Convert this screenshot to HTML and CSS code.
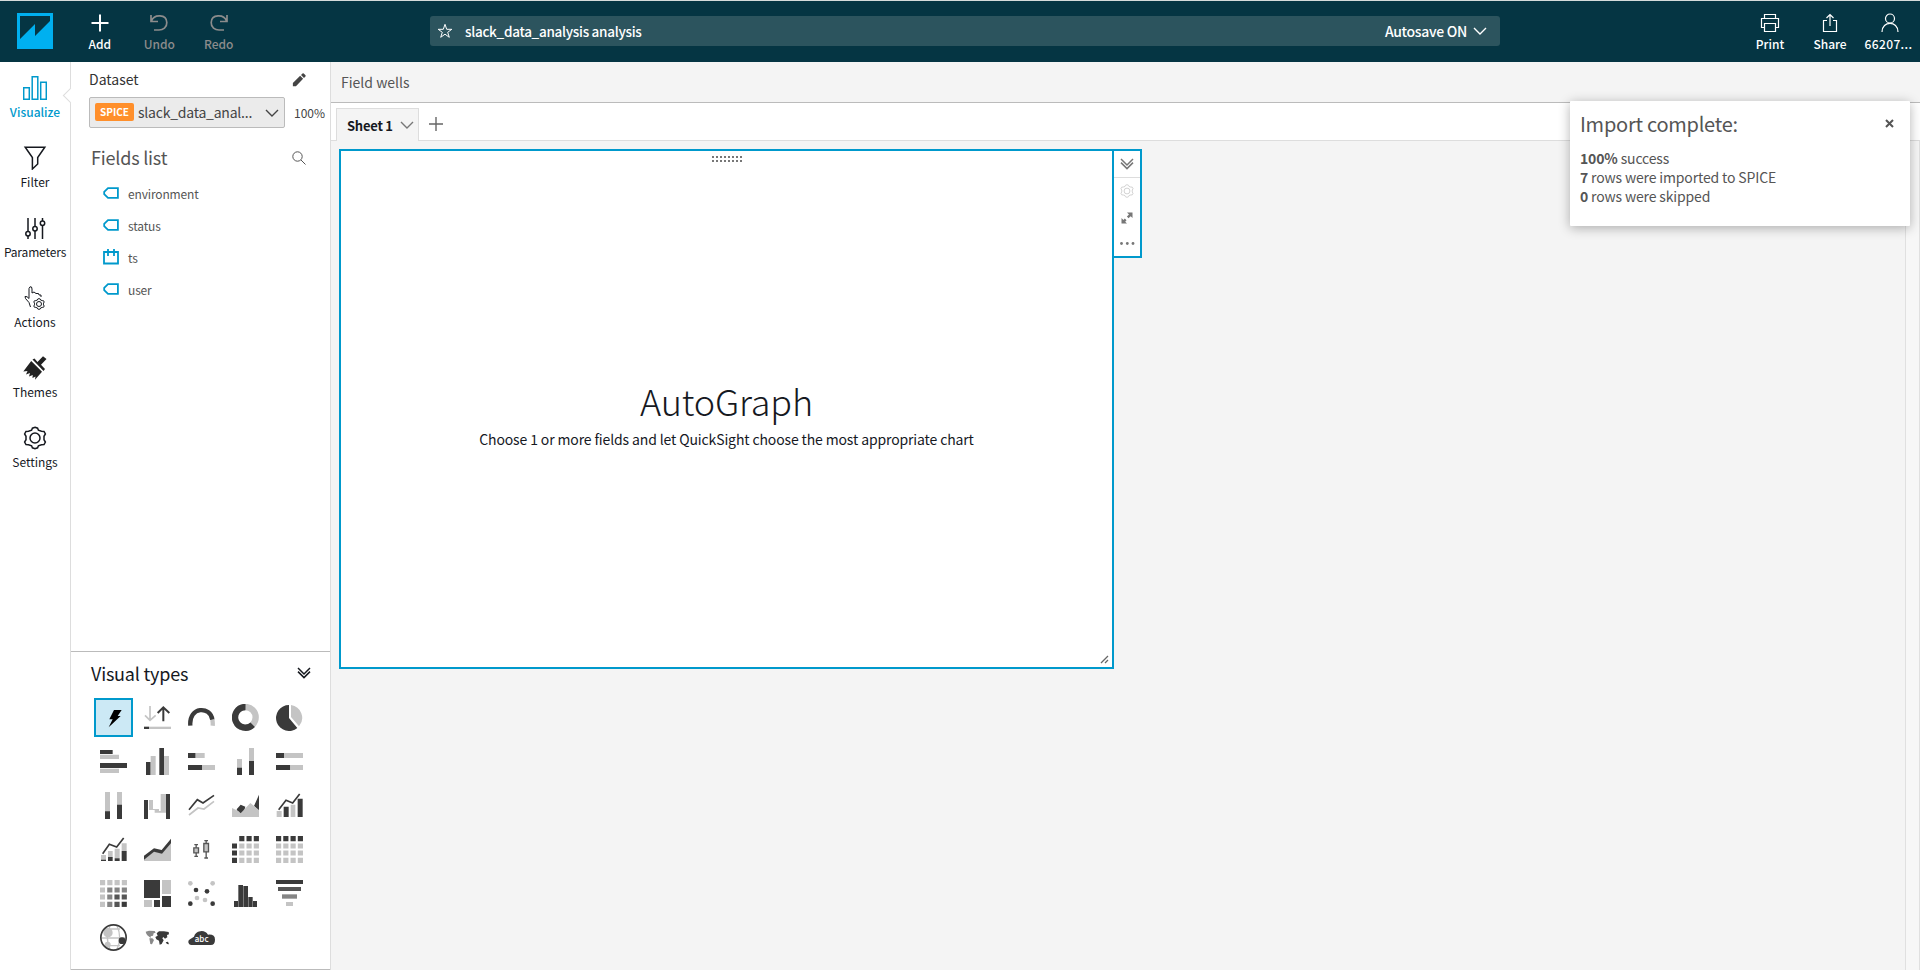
FILE: index.html
```
<!DOCTYPE html>
<html lang="en">
<head>
<meta charset="utf-8">
<title>slack_data_analysis analysis</title>
<link rel="stylesheet" href="styles.css">
</head>
<body>
<svg class="defs" width="0" height="0">
  <symbol id="gear" viewBox="0 0 24 24"><path d="M12 1.2 L14.6 2.2 L15.4 4.2 L18.5 5.2 L21 5.4 L22.4 8 L21 10.3 V13.7 L22.4 16 L21 18.6 L18.5 18.8 L15.4 19.8 L14.6 21.8 L12 22.8 L9.4 21.8 L8.6 19.8 L5.5 18.8 L3 18.6 L1.6 16 L3 13.7 V10.3 L1.6 8 L3 5.4 L5.5 5.2 L8.6 4.2 L9.4 2.2 Z"/><circle cx="12" cy="12" r="5"/></symbol>
  <symbol id="tag" viewBox="0 0 16 12"><path d="M5 1.1H14.9V10.9H5L1.2 7.2V4.8Z"/></symbol>
  <symbol id="double-chevron" viewBox="0 0 14 12"><path d="M1 1 7 7 13 1M1 4.6 7 10.6 13 4.6"/></symbol>
</svg>
<header class="topbar">
  <svg class="logo" viewBox="0 0 36 36"><path fill="#00b0f0" d="M0 0H36V36H0Z"/><path fill="#053543" d="M3 3H33V8L18 23V11L3 26Z"/></svg>
  <nav class="tools">
    <div class="tool"><svg viewBox="0 0 20 20"><path d="M10 1.5V18.5M1.5 10H18.500" stroke-width="2"/></svg><span>Add</span></div>
    <div class="tool dim"><svg viewBox="0 0 20 20"><path d="M2 2V8.500H9M2.500 8C5 1 17.500 1 17.800 9.500C18 14.500 14 17 10 17H5" stroke-width="1.700"/></svg><span>Undo</span></div>
    <div class="tool dim"><svg viewBox="0 0 20 20"><path d="M18 2V8.500H11M17.500 8C15 1 2.500 1 2.200 9.500C2 14.500 6 17 10 17H15" stroke-width="1.700"/></svg><span>Redo</span></div>
  </nav>
  <div class="title-bar">
    <svg class="star" viewBox="0 0 16 16"><path d="M8 1.300 9.700 6.300H14.800L10.700 9.300 12.300 14.300 8 11.200 3.700 14.300 5.300 9.300 1.200 6.300H6.300Z"/></svg>
    <span class="title">slack_data_analysis analysis</span>
    <span class="autosave">Autosave ON</span>
    <svg class="chev" viewBox="0 0 14 8"><path d="M1 1 7 7 13 1"/></svg>
  </div>
  <nav class="account">
    <div class="tool"><svg viewBox="0 0 20 20"><path d="M4.500 5.500V1.500H15.500V5.500M4.500 14.500H1.500V5.500H18.500V14.500H15.500M4.500 10.500H15.500V18.500H4.500Z"/></svg><span>Print</span></div>
    <div class="tool"><svg viewBox="0 0 20 20"><path d="M7 7.500H3.500V18.500H16.500V7.500H13M10 13V1.500M6.500 5 10 1.500 13.500 5"/></svg><span>Share</span></div>
    <div class="tool"><svg viewBox="0 0 20 20"><circle cx="10" cy="5.500" r="4.500"/><path d="M2 19C2 7.500 18 7.500 18 19"/></svg><span class="user">66207...</span></div>
  </nav>
</header>
<div class="workspace">
  <nav class="rail">
    <div class="rail-item active"><svg viewBox="0 0 24 24"><path d="M.700 11.700H6.300V23.300H.700ZM9.200.800H14.800V23.300H9.200ZM17.700 6.200H23.300V23.300H17.700Z"/></svg><span>Visualize</span></div>
    <div class="rail-item"><svg viewBox="0 0 24 24"><path d="M2.200 1.200H21.800L14.700 11.500V18L9.400 23V11.500Z"/></svg><span>Filter</span></div>
    <div class="rail-item"><svg viewBox="0 0 24 24"><path d="M5 2V15.500M5 20V23M12 2V10.500M12 15V23M19.500 2V5M19.500 9.500V23"/><circle cx="5" cy="17.700" r="2.200"/><circle cx="12" cy="12.700" r="2.200"/><circle cx="19.500" cy="7.200" r="2.200"/></svg><span class="narrow">Parameters</span></div>
    <div class="rail-item thin"><svg viewBox="0 0 24 24"><path d="M7.500 21 6 16.500 2.500 12.500 2 10.500 4 10.700 6 12.500V2.500L7 .800 8.500 1 9 3V7L11 6 13 7.500 15.500 7.500 16 9 18 9V11"/><use href="#gear" x="10" y="12" width="12" height="12" stroke-width="2"/></svg><span>Actions</span></div>
    <div class="rail-item"><svg viewBox="0 0 24 24" class="solid"><path d="M9.500 3.500 11.500 2.500 14.500 6 20 .300 23.500 3 18 8.700 22 13 20.500 15Z"/><path d="M8.200 5 19 15.800 12 23.800 12.500 20.500 9.500 22 9.700 19 6 20.500 7 17 3 18.500 4.500 15 .300 15.500Z"/></svg><span>Themes</span></div>
    <div class="rail-item"><svg><use href="#gear"/></svg><span>Settings</span></div>
    <i class="pointer"></i>
  </nav>
  <aside class="panel">
    <section class="fields">
      <div class="row dataset"><span>Dataset</span><svg viewBox="0 0 16 16" class="pencil"><path d="M1 15V11.500L9.300 3.200 12.700 6.600 4.500 15ZM10.300 2.300 12 .600Q12.700 0 13.400.600L15.400 2.600Q16 3.300 15.400 4L13.700 5.700Z"/></svg></div>
      <div class="row source">
        <div class="select"><b class="spice">SPICE</b><span class="source-name">slack_data_anal...</span><svg class="chev" viewBox="0 0 14 8"><path d="M1 1 7 7 13 1"/></svg></div>
        <span class="pct">100%</span>
      </div>
      <div class="row list-head"><span class="list-title">Fields list</span><svg class="search" viewBox="0 0 14 14"><circle cx="5.500" cy="5.500" r="4.700"/><path d="M9 9 13.500 13.500"/></svg></div>
      <ul class="field-list">
        <li><svg class="tag"><use href="#tag"/></svg><span>environment</span></li>
        <li><svg class="tag"><use href="#tag"/></svg><span>status</span></li>
        <li><svg class="cal" viewBox="0 0 16 16"><path d="M1 3H15V14.500H1ZM5 0V7M11 0V7"/></svg><span>ts</span></li>
        <li><svg class="tag"><use href="#tag"/></svg><span>user</span></li>
      </ul>
    </section>
    <section class="visuals">
      <div class="row vhead"><span class="vtitle">Visual types</span><svg class="dchev"><use href="#double-chevron"/></svg></div>
      <div class="grid">
        <div class="cell selected"><svg viewBox="0 0 81 81"><path fill="#000" d="M42 18H65L53 36H62L26 70 38 46H28Z"/></svg></div>
        <div class="cell"><svg viewBox="0 0 81 81"><path class="lg" stroke-width="5" d="M18 6V50M3 34 18 49 35 34"/><path class="ld" stroke-width="6" d="M58 52V12M41 27 58 10 76 27"/><path class="g" d="M15 68H81V75H15Z"/><path d="M0 68H15V75H0Z"/></svg></div>
        <div class="cell"><svg viewBox="0 0 81 81"><path class="ld" stroke-width="13" d="M7 65C2 6 68 6 73 47"/><path class="lg" stroke-width="13" d="M73 47Q75 56 74 65"/></svg></div>
        <div class="cell"><svg viewBox="0 0 81 81"><circle class="lg" cx="40" cy="40" r="31" stroke-width="19"/><path class="ld" stroke-width="19" d="M40.500 9A31 31 0 1 0 62 62"/></svg></div>
        <div class="cell"><svg viewBox="0 0 81 81"><path d="M39 3A39 39 0 1 0 64 72L39 42Z"/><path class="g" d="M45 3A39 39 0 0 1 69 67L45 39Z"/></svg></div>

        <div class="cell"><svg viewBox="0 0 81 81"><path d="M0 6H38V18H0ZM0 45H81V60H0Z"/><path class="g" d="M0 20H57V33H0ZM0 62H57V75H0Z"/></svg></div>
        <div class="cell"><svg viewBox="0 0 81 81"><path d="M6 42H20V81H6ZM46 0H60V81H46Z"/><path class="g" d="M20 24H35V81H20ZM60 24H75V81H60Z"/></svg></div>
        <div class="cell"><svg viewBox="0 0 81 81"><path d="M0 15H23V30H0ZM0 51H43V66H0Z"/><path class="g" d="M23 15H50V30H23ZM43 51H81V66H43Z"/></svg></div>
        <div class="cell"><svg viewBox="0 0 81 81"><path class="g" d="M15 33H30V60H15ZM51 0H66V40H51Z"/><path d="M15 59H30V81H15ZM51 39H66V81H51Z"/></svg></div>
        <div class="cell"><svg viewBox="0 0 81 81"><path d="M0 15H24V30H0ZM0 51H43V66H0Z"/><path class="g" d="M24 15H81V30H24ZM43 51H81V66H43Z"/></svg></div>

        <div class="cell"><svg viewBox="0 0 81 81"><path class="g" d="M15 0H30V59H15ZM51 0H66V39H51Z"/><path d="M15 58H30V81H15ZM51 38H66V81H51Z"/></svg></div>
        <div class="cell"><svg viewBox="0 0 81 81"><path class="g" d="M12 24H27V51H45V57H50V6H66V62H32V54H15V24Z"/><path d="M0 24H12V81H0ZM66 6H78V81H66Z"/></svg></div>
        <div class="cell"><svg viewBox="0 0 81 81"><path class="ld" stroke-width="5" d="M3 53 28 23 45 33 78 10"/><path class="lg" stroke-width="5" d="M3 69 30 48 48 51 78 28"/></svg></div>
        <div class="cell"><svg viewBox="0 0 81 81"><path d="M14 52 26 38 40 44 34 65H20ZM66 42 81 8V56Z"/><path class="g" d="M0 48 20 58 26 64 55 33 81 54V75H0Z"/></svg></div>
        <div class="cell"><svg viewBox="0 0 81 81"><path class="g" d="M2 57H17V75H2ZM44 38H58V75H44Z"/><path d="M23 44H38V75H23ZM65 20H80V75H65Z"/><path class="ld" stroke-width="5" d="M8 53 30 25 50 33 71 6"/></svg></div>

        <div class="cell"><svg viewBox="0 0 81 81"><path class="g" d="M3 57H18V72H3ZM24 45H38V64H24ZM44 38H59V67H44ZM65 22H80V45H65Z"/><path d="M3 71H18V75H3ZM24 63H38V75H24ZM44 67H59V75H44ZM65 45H80V75H65Z"/><path class="ld" stroke-width="5" d="M8 53 28 25 50 33 71 6"/></svg></div>
        <div class="cell"><svg viewBox="0 0 81 81"><path class="g" d="M0 69 30 46 54 52 81 22V75H0Z"/><path d="M0 59 30 37 53 42 81 8V22L54 53 30 47 0 71Z"/></svg></div>
        <div class="cell"><svg viewBox="0 0 81 81"><path stroke="#555" stroke-width="4" fill="none" d="M24.500 25V62M54.500 13V67M19 26H30M19 61H30M49 14H60M49 66H60"/><path class="g" stroke="#555" stroke-width="4" d="M17.500 35.500H31.500V50.500H17.500ZM47.500 22.500H61.500V47.500H47.500Z"/></svg></div>
        <div class="cell"><svg viewBox="0 0 81 81"><path class="dashg" d="M21.700 30H81M21.700 51H81M21.700 73H81"/><path class="dashd" d="M21.700 8H81M0 30H15M0 51H15M0 73H15"/></svg></div>
        <div class="cell"><svg viewBox="0 0 81 81"><path class="dashg" d="M0 30H81M0 51H81M0 73H81"/><path class="dashd" d="M0 8H81"/></svg></div>

        <div class="cell"><svg viewBox="0 0 81 81"><path class="dashg" d="M0 8H81M0 30H15M0 51H15M0 73H15"/><path class="dashm" d="M21.700 30H81M21.700 51H37M21.700 73H37"/><path class="dashn" d="M43.300 51H81M43.300 73H60"/><path class="dashd" d="M65 73H81"/></svg></div>
        <div class="cell"><svg viewBox="0 0 81 81"><path d="M0 0H48V54H0ZM54 48H81V81H54ZM30 60H48V81H30Z"/><path class="g" d="M54 0H81V42H54ZM0 60H24V81H0Z"/></svg></div>
        <div class="cell"><svg viewBox="0 0 81 81"><g class="g"><circle cx="7" cy="10" r="7"/><circle cx="74" cy="10" r="7"/><circle cx="27" cy="54" r="7"/><circle cx="51" cy="60" r="7"/></g><circle cx="24" cy="30" r="7"/><circle cx="57" cy="34" r="7"/><circle cx="7" cy="71" r="7"/><circle cx="74" cy="71" r="7"/></svg></div>
        <div class="cell"><svg viewBox="0 0 81 81"><path d="M6 63H18V81H6ZM19 15H33V81H19ZM34 18H48V81H34ZM49 51H62V81H49ZM63 63H75V81H63Z"/></svg></div>
        <div class="cell"><svg viewBox="0 0 81 81"><path d="M0 0H81V12H0Z"/><path fill="#555" d="M6 21H75V33H6Z"/><path fill="#858585" d="M18 43H63V56H18Z"/><path class="g" d="M30 66H51V78H30Z"/></svg></div>

        <div class="cell"><svg viewBox="0 0 81 81"><path class="lg" stroke-width="4" d="M5 42H76M20 15H60M20 65H60M30 5Q14 40 30 76M51 5Q67 40 51 76"/><circle class="g" cx="24" cy="26" r="14"/><circle class="g" cx="23" cy="62" r="9"/><circle cx="66" cy="50" r="10"/><circle class="ld" cx="40.500" cy="40.500" r="38" stroke-width="5"/></svg></div>
        <div class="cell"><svg viewBox="0 0 81 81"><path fill="#8a8a8a" d="M5 23 15 20 32 21 35 26 29 28 27 35 20 37 20 42 10 34 7 29ZM16 43 25 43 30 48 24 61 19 60Z"/><path d="M38 28 45 22 60 22 74 24 75 31 69 33 70 40 63 44 58 39 55 43 59 49 53 60 47 62 45 50 37 46 34 39 41 35ZM65 55 72 53 75 61 69 60Z"/></svg></div>
        <div class="cell"><svg viewBox="0 0 81 81"><path d="M9 63A9 9 0 0 1 6 46L18 38A23 22 0 0 1 60 32Q81 30 81 47T67 63Z"/><text x="41" y="54" class="abc">abc</text></svg></div>
      </div>
    </section>
  </aside>
  <main class="main">
    <div class="wells"><span>Field wells</span></div>
    <div class="tabs">
      <div class="tab"><span class="tab-label">Sheet 1</span><svg class="chev" viewBox="0 0 14 8"><path d="M1 1 7 7 13 1"/></svg></div>
      <svg class="plus" viewBox="0 0 14 14"><path d="M7 0V14M0 7H14"/></svg>
    </div>
    <div class="sheet">
      <div class="visual">
        <i class="grip"></i>
        <h1>AutoGraph</h1>
        <p>Choose 1 or more fields and let QuickSight choose the most appropriate chart</p>
        <svg class="resize" viewBox="0 0 9 9"><path d="M1 8 8 1M5 8 8 5"/></svg>
      </div>
      <div class="vmenu">
        <div class="vm-top"><svg class="dchev"><use href="#double-chevron"/></svg></div>
        <svg class="vm-gear"><use href="#gear"/></svg>
        <svg class="vm-exp" viewBox="0 0 12 12"><path fill="#777" d="M6 .500H11.500V6L9.700 4.200 7.500 6.300 5.900 4.600 8 2.400ZM.500 6V11.500H6L4.200 9.700 5.500 8.200 3.800 6.500 2.400 7.900Z"/></svg>
        <svg class="vm-dots" viewBox="0 0 15 3"><g fill="#777"><circle cx="1.500" cy="1.500" r="1.400"/><circle cx="7.300" cy="1.500" r="1.400"/><circle cx="13" cy="1.500" r="1.400"/></g></svg>
      </div>
      <div class="scroll"></div>
    </div>
  </main>
</div>
<div class="toast">
  <div class="toast-head"><span class="toast-title">Import complete:</span><svg class="close" viewBox="0 0 9 9"><path d="M1 1 8 8M8 1 1 8"/></svg></div>
  <div class="line"><b>100%</b> success</div>
  <div class="line"><b>7</b> rows were imported to SPICE</div>
  <div class="line"><b>0</b> rows were skipped</div>
</div>
</body>
</html>
```
FILE: styles.css
```
* { box-sizing: border-box; }
body { margin: 0; width: 1920px; height: 970px; overflow: hidden; display: flex; flex-direction: column; font-family: "Noto Sans CJK SC", "Noto Sans", sans-serif; font-size: 12px; color: #16191f; background: #fff; }
svg { display: block; flex: none; fill: none; stroke: currentColor; }
span { white-space: nowrap; }
i { display: block; }
.defs { position: absolute; }

.topbar { height: 62px; flex: none; border-top: 1px solid #d5dbdb; background: #053543; color: #fff; display: flex; align-items: flex-start; }
.logo { width: 36px; height: 36px; margin: 12px 0 0 17px; stroke: none; }
.tools { display: flex; margin-left: 17px; width: 180px; }
.tool { width: 60px; display: flex; flex-direction: column; align-items: center; padding-top: 12px; font-weight: 500; line-height: 16px; font-size: 12px; }
.tools .tool { width: 59.5px; }
.tool svg { width: 20px; height: 20px; margin-bottom: 3px; stroke-width: 1.2; }
.dim { color: #8c8c8c; }
.user { letter-spacing: .4px; margin-right: 3px; }
.title-bar { width: 1070px; height: 30px; margin: 15px 0 0 180px; background: #2c545e; border-radius: 3px; display: flex; align-items: center; padding: 0 13px 0 7px; font-size: 14px; font-weight: 500; }
.title-bar span { margin-top: -1px; }
.star { width: 16px; height: 16px; }
.title { margin-left: 12px; font-size: 13.5px; letter-spacing: -.28px; }
.autosave { margin-left: auto; letter-spacing: -.3px; }
.title-bar .chev { width: 14px; height: 8px; margin-left: 6px; stroke-width: 1.4; }
.account { display: flex; margin-left: 240px; }

.workspace { flex: 1; display: flex; min-height: 0; }
.rail { width: 71px; flex: none; border-right: 1px solid #ddd; position: relative; padding-top: 14px; }
.rail-item { height: 70px; display: flex; flex-direction: column; align-items: center; line-height: 16px; font-size: 12px; font-weight: 400; }
.rail-item svg { width: 24px; height: 24px; margin-bottom: 4px; stroke-width: 1.5; }
.rail-item.thin svg { stroke-width: 1; }
.narrow { letter-spacing: -.15px; }
.solid { fill: #222; stroke: none; }
.active { color: #0099cc; font-weight: 500; }
.pointer { position: absolute; left: 65px; top: 28px; width: 11px; height: 11px; transform: rotate(45deg); border-left: 1px solid #ddd; border-bottom: 1px solid #ddd; background: #fff; }

.panel { width: 260px; flex: none; border-right: 1px solid #ddd; display: flex; flex-direction: column; }
.row { display: flex; align-items: center; }
.fields { height: 589px; }
.dataset { height: 34px; padding: 0 24px 0 18px; justify-content: space-between; font-size: 14px; color: #333; }
.dataset span { margin-top: -1px; }
.pencil { width: 14px; height: 14px; fill: #444; stroke: none; margin-top: 2px; }
.source { height: 33px; padding-left: 18px; font-size: 12px; color: #444; }
.select { width: 196px; height: 31px; border: 1px solid #bbb; border-radius: 2px; background: #ebebeb; display: flex; align-items: center; padding: 0 5px; font-size: 14px; }
.spice { width: 39px; height: 18px; margin-top: -2px; background: #ff8f2b; color: #fff; border-radius: 2px; font-size: 10px; line-height: 18px; text-align: center; }
.source-name { margin: -1px 0 0 4px; letter-spacing: -.22px; }
.select .chev { width: 14px; height: 8px; margin-left: auto; stroke-width: 1.4; }
.pct { margin: -1px 0 0 9px; }
.list-head { height: 58px; padding: 0 24px 0 20px; justify-content: space-between; font-size: 18px; color: #555; }
.list-title { letter-spacing: -.2px; margin-top: -2px; }
.search { width: 14px; height: 14px; margin-top: -1px; }
.field-list { list-style: none; margin: -10px 0 0; padding: 0 0 0 31px; color: #555; font-size: 12px; letter-spacing: -.15px; }
.field-list li { height: 32px; display: flex; align-items: center; gap: 10px; }
.tag, .cal { width: 16px; height: 12px; stroke: #0099cc; stroke-width: 1.8; margin-left: 1px; margin-right: -1px; }
.cal { height: 16px; }
.visuals { height: 319px; border-top: 1px solid #bbb; border-bottom: 1px solid #bbb; }
.vhead { height: 43px; padding: 0 19px 0 20px; justify-content: space-between; font-size: 18px; }
.vtitle { letter-spacing: -.2px; margin-top: -2px; }
.dchev { width: 14px; height: 12px; stroke-width: 1.5; margin-top: -2px; }
.grid { display: grid; grid-template-columns: repeat(5, 44px); grid-auto-rows: 44px; padding-left: 20px; }
.cell { display: grid; place-items: center; width: 39px; height: 39px; margin: 3px; }
.cell svg { width: 27px; height: 27px; fill: #3a3a3a; stroke: none; }
.selected { background: #cce9f5; box-shadow: inset 0 0 0 2px #0099cc; }
.cell .g { fill: #c4c4c4; }
.cell .lg { fill: none; stroke: #c4c4c4; }
.cell .ld { fill: none; stroke: #3a3a3a; }
.dashg, .dashd, .dashm, .dashn { stroke-width: 15.5; stroke-dasharray: 15.5 6.3; }
.dashg { stroke: #c4c4c4; }
.dashd { stroke: #3a3a3a; }
.dashm { stroke: #858585; }
.dashn { stroke: #555; }
.abc { fill: #fff; font-size: 24px; font-weight: 500; text-anchor: middle; }

.main { flex: 1; display: flex; flex-direction: column; background: #f4f4f4; }
.wells { height: 41px; border-bottom: 1px solid #bbb; padding: 0 0 1px 10px; display: flex; align-items: center; font-size: 14px; color: #555; }
.tabs { height: 38px; background: #fff; border-bottom: 1px solid #ddd; display: flex; align-items: flex-end; padding-left: 5px; }
.tab { width: 83px; height: 33px; margin-bottom: -1px; background: #f4f4f4; border: 1px solid #ddd; border-bottom: 0; display: flex; align-items: center; padding: 0 4px 0 10px; font-size: 13px; font-weight: 700; }
.tab-label { letter-spacing: -.25px; }
.tab .chev { width: 14px; height: 8px; margin: 0 0 0 auto; color: #777; stroke-width: 1.4; }
.plus { width: 14px; height: 14px; margin: 0 0 9px 10px; color: #666; stroke-width: 1.4; }
.sheet { flex: 1; display: flex; align-items: flex-start; padding: 8px 0 0 8px; }
.visual { position: relative; width: 775px; height: 520px; border: 2px solid #0099cc; background: #fff; text-align: center; }
.grip { width: 31px; height: 6px; margin: 5px auto 0; transform: translateX(1px); background: repeating-linear-gradient(90deg, #777 0 2px, transparent 2px 4px); -webkit-mask: linear-gradient(#000 0 2px, transparent 2px 4px, #000 4px); mask: linear-gradient(#000 0 2px, transparent 2px 4px, #000 4px); }
h1 { font-size: 36px; font-weight: 300; line-height: 48px; margin: 214px 0 0; letter-spacing: -.2px; }
p { margin: 3px 0 0; font-size: 14px; line-height: 24px; letter-spacing: -.13px; }
.resize { position: absolute; right: 3px; bottom: 3px; width: 9px; height: 9px; color: #666; stroke-width: 1.3; }
.vmenu { width: 30px; height: 109px; margin-left: -2px; border: 2px solid #0099cc; background: #fff; color: #777; display: flex; flex-direction: column; align-items: center; position: relative; }
.vm-top { width: 26px; height: 27px; border-bottom: 1px solid #ddd; display: grid; place-items: center; }
.vm-top .dchev { margin: 0; }
.vm-gear { width: 14px; height: 14px; margin-top: 6px; color: #ccc; stroke-width: 1.5; }
.vm-exp { width: 12px; height: 12px; margin-top: 14px; stroke: none; }
.vm-dots { width: 15px; height: 3px; margin-top: 18px; stroke: none; }
.scroll { align-self: stretch; width: 15px; margin: -8px 0 0 auto; border: 1px solid #e0e0e0; border-width: 0 1px; background: #f7f7f7; }

.toast { position: absolute; left: 1570px; top: 101px; width: 340px; height: 125px; background: #fff; box-shadow: 0 2px 12px rgba(0,0,0,.3); padding: 9px 10px; font-size: 14px; line-height: 19px; color: #555; border-radius: 1px; letter-spacing: -.15px; }
.toast-head { display: flex; justify-content: space-between; height: 39px; padding-right: 6px; font-size: 20px; line-height: 28px; letter-spacing: -.25px; }
.close { width: 9px; height: 9px; margin-top: 9px; stroke-width: 2; }
.line { height: 19px; }
```
